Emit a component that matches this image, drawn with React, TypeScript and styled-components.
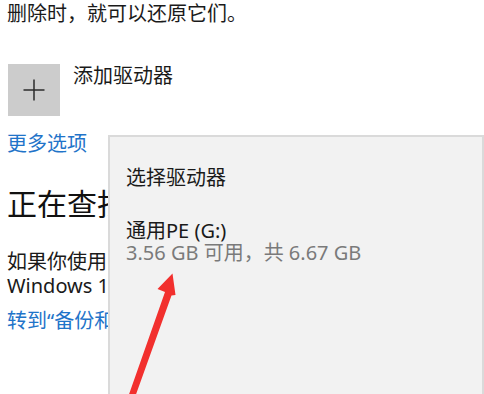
import React from "react";
import styled, { createGlobalStyle } from "styled-components";

const Global = createGlobalStyle`
  html, body { margin: 0; padding: 0; background: #ffffff; }
  body { font-family: "Noto Sans", "Noto Sans CJK SC", sans-serif; color: #1a1a1a; }
`;

const Screen = styled.div`
  position: relative;
  width: 484px;
  height: 394px;
  overflow: hidden;
  background: #ffffff;
`;

const Content = styled.div`
  display: flex;
  flex-direction: column;
  align-items: flex-start;
  padding: 2px 0 0 7px;
  white-space: nowrap;
`;

const Text = styled.div<{ $mt?: number }>`
  font-size: 20px;
  line-height: 24px;
  margin-top: ${(p) => p.$mt ?? 0}px;
`;

const Link = styled.a<{ $mt?: number }>`
  display: block;
  font-size: 20px;
  line-height: 24px;
  color: #1f74c9;
  text-decoration: none;
  margin-top: ${(p) => p.$mt ?? 0}px;
`;

const Heading = styled.h2`
  margin: 28px 0 0 0;
  font-size: 30px;
  line-height: 40px;
  font-weight: 400;
  color: #111;
`;

const AddRow = styled.div`
  display: flex;
  align-items: flex-start;
  gap: 13px;
  margin-top: 38px;
`;

const AddTile = styled.div`
  width: 52px;
  height: 52px;
  margin-left: 1px;
  background: #cccccc;
  display: flex;
  align-items: center;
  justify-content: center;
`;

const Flyout = styled.div`
  position: absolute;
  left: 108px;
  top: 135px;
  width: 376px;
  height: 280px;
  box-sizing: border-box;
  background: #f2f2f2;
  border: 2px solid #dadada;
  padding: 29px 0 0 16px;
  display: flex;
  flex-direction: column;
  white-space: nowrap;
`;

const FlyTitle = styled.div`
  font-size: 20px;
  line-height: 24px;
  color: #1a1a1a;
`;

const DriveName = styled.div`
  font-size: 20px;
  line-height: 22px;
  color: #1a1a1a;
  margin-top: 30px;
`;

const DriveInfo = styled.div`
  font-size: 20px;
  line-height: 22px;
  color: #7a7a7a;
`;

const Annotation = styled.svg`
  position: absolute;
  left: 0;
  top: 0;
  pointer-events: none;
`;

export default function App() {
  return (
    <Screen>
      <Global />
      <Content>
        <Text>删除时，就可以还原它们。</Text>
        <AddRow>
          <AddTile>
            <svg width="24" height="24" viewBox="0 0 24 24">
              <path d="M12 1.5V22.5M1.5 12H22.5" stroke="#2b2b2b" strokeWidth="1.5" fill="none" />
            </svg>
          </AddTile>
          <Text>添加驱动器</Text>
        </AddRow>
        <Link $mt={16} href="#">更多选项</Link>
        <Heading>正在查找旧备份?</Heading>
        <Text $mt={26}>如果你使用 Windows 7 备份和还原工具创建了备份，它仍将在</Text>
        <Text>Windows 10 中工作。</Text>
        <Link $mt={11} href="#">转到“备份和还原(Windows 7)”</Link>
      </Content>
      <Flyout>
        <FlyTitle>选择驱动器</FlyTitle>
        <DriveName>通用PE (G:)</DriveName>
        <DriveInfo>3.56 GB 可用，共 6.67 GB</DriveInfo>
      </Flyout>
      <Annotation width="484" height="394" viewBox="0 0 484 394">
        <polygon
          points="172.5,273.5 157.5,289 165,292 127,400 134,400 171.5,295.5 175.5,295"
          fill="#f2302e"
        />
      </Annotation>
    </Screen>
  );
}
